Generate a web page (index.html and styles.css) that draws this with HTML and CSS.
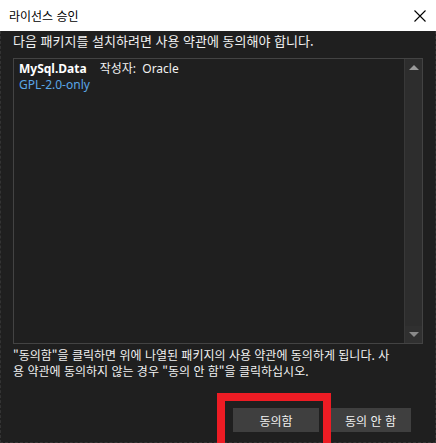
FILE: index.html
```html
<!DOCTYPE html>
<html lang="ko">
<head>
<meta charset="utf-8">
<link rel="stylesheet" href="styles.css">
</head>
<body>
<div class="window">
  <div class="titlebar">
    <span class="title">라이선스 승인</span>
    <svg class="close" width="12" height="12" viewBox="0 0 12 12"><path d="M0.5 0.5 L11.5 11.5 M11.5 0.5 L0.5 11.5" stroke="#000" stroke-width="1.1" fill="none"/></svg>
  </div>
  <div class="content">
    <p class="intro">다음 패키지를 설치하려면 사용 약관에 동의해야 합니다.</p>
    <div class="listbox">
      <div class="items">
        <div class="item">
          <div class="line1"><span class="pkg">MySql.Data</span><span class="author">작성자:&nbsp; Oracle</span></div>
          <div class="license">GPL-2.0-only</div>
        </div>
      </div>
      <div class="scrollbar">
        <div class="arrow up"></div>
        <div class="track"></div>
        <div class="arrow down"></div>
      </div>
    </div>
    <p class="note">"동의함"을 클릭하면 위에 나열된 패키지의 사용 약관에 동의하게 됩니다. 사<br>용 약관에 동의하지 않는 경우 "동의 안 함"을 클릭하십시오.</p>
    <div class="buttons">
      <button class="btn accept">동의함</button>
      <button class="btn decline">동의 안 함</button>
    </div>
    <div class="highlight"></div>
  </div>
</div>
</body>
</html>
```
FILE: styles.css
```css
html, body {
  margin: 0;
  padding: 0;
  background: #1f1f1f;
  overflow: hidden;
}
body {
  font-family: "Noto Sans", "Noto Sans CJK KR", sans-serif;
  font-size: 12px;
  color: #f1f1f1;
}
.window {
  width: 436px;
  height: 443px;
  display: flex;
  flex-direction: column;
  position: relative;
}
.titlebar {
  height: 31px;
  background: #ffffff;
  display: flex;
  align-items: center;
  justify-content: space-between;
  padding: 0 10px 0 9px;
  flex: none;
}
.title {
  color: #000;
  font-family: "Noto Sans CJK KR", sans-serif;
  font-size: 12px;
  line-height: 16px;
}
.close {
  display: block;
  margin-top: 1px;
}
.content {
  flex: 1;
  border: 1px dashed #333333;
  border-top: none;
  padding: 0 12px;
  display: flex;
  flex-direction: column;
  position: relative;
}
.intro {
  margin: 2px 0 0;
  line-height: 16px;
  font-size: 13px;
  font-family: "Noto Sans CJK KR", sans-serif;
}
.listbox {
  margin-top: 9px;
  height: 286px;
  border: 1px solid #434343;
  background: #1f1f1f;
  display: flex;
  box-sizing: border-box;
}
.items {
  flex: 1;
  padding: 2px 5px;
}
.item {
  line-height: 16px;
}
.pkg {
  font-weight: bold;
  color: #ffffff;
  margin-right: 13px;
}
.author {
  color: #f1f1f1;
}
.license {
  color: #5aa6e6;
}
.scrollbar {
  width: 17px;
  background: #2d2d2d;
  border-left: 1px solid #383838;
  display: flex;
  flex-direction: column;
}
.track {
  flex: 1;
}
.arrow {
  height: 17px;
  display: flex;
  align-items: center;
  justify-content: center;
}
.arrow::before {
  content: "";
  width: 0;
  height: 0;
  border-left: 5px solid transparent;
  border-right: 5px solid transparent;
}
.arrow.up::before {
  border-bottom: 5px solid #9a9a9a;
}
.arrow.down {
  background: #303030;
}
.arrow.down::before {
  border-top: 5px solid #8a8a8a;
}
.note {
  margin: 3px 0 0;
  line-height: 16px;
  font-family: "Noto Sans CJK KR", sans-serif;
}
.buttons {
  margin-top: 29px;
  display: flex;
  justify-content: flex-end;
  gap: 11px;
  padding-right: 12px;
}
.btn {
  height: 24px;
  border: none;
  background: #3f3f3f;
  color: #f1f1f1;
  font-family: "Noto Sans CJK KR", sans-serif;
  font-size: 12px;
  padding: 0;
}
.accept { width: 86px; }
.decline { width: 81px; }
.highlight {
  position: absolute;
  left: 216px;
  top: 362px;
  width: 114px;
  height: 70px;
  box-sizing: border-box;
  border: 8px solid #ed1c24;
}
```
